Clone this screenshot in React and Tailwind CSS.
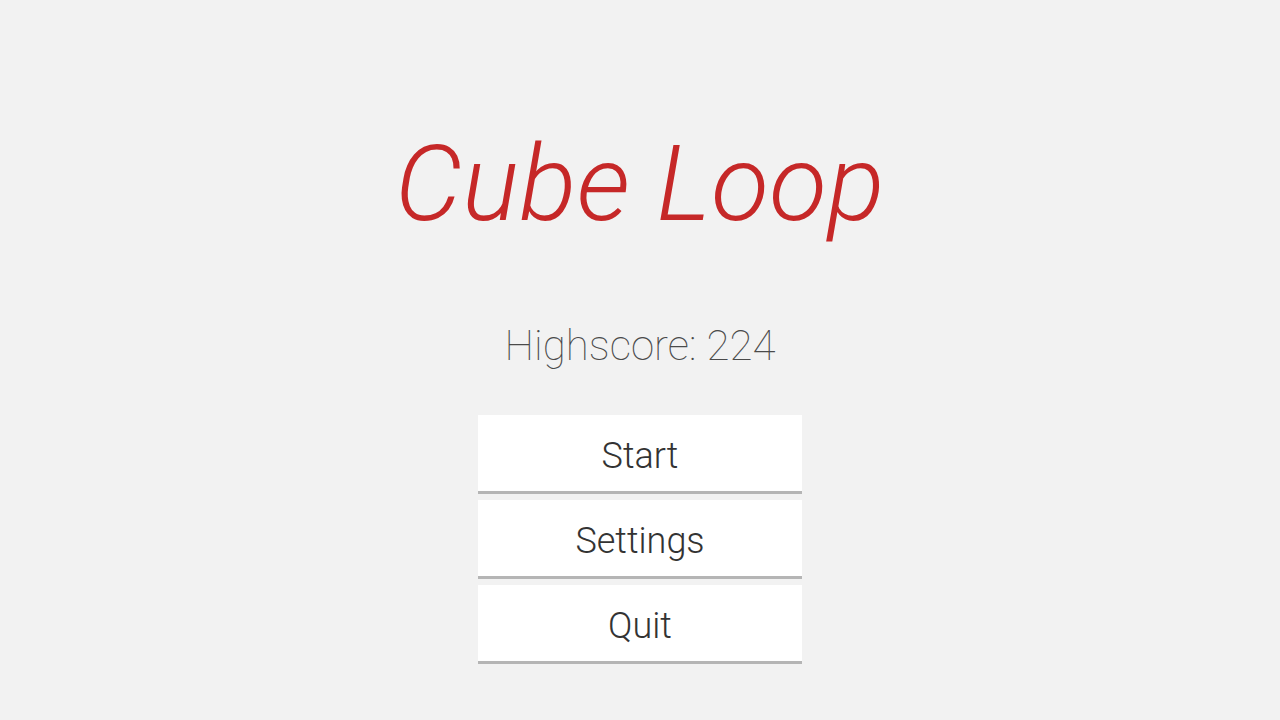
const BUTTONS = ['Start', 'Settings', 'Quit'];

export default function App() {
  return (
    <div
      className="w-[1280px] h-[720px] bg-[#f2f2f2] flex flex-col items-center pt-[131px]"
      style={{ fontFamily: 'Roboto, "Noto Sans", sans-serif' }}
    >
      {/* Title */}
      <h1 className="text-[106px] leading-none italic font-light text-[#c62828] tracking-[0.5px]">
        Cube Loop
      </h1>

      {/* Highscore */}
      <p className="mt-[88px] text-[42px] leading-none font-thin text-[#4a4a4a]">
        Highscore: 224
      </p>

      {/* Menu */}
      <div className="mt-[48px] w-[324px] flex flex-col gap-[6px]">
        {BUTTONS.map((label) => (
          <button
            key={label}
            className="h-[79px] bg-white border-b-[3px] border-[#b5b5b5] flex items-center justify-center pt-[6px] text-[36px] leading-none font-light text-[#333333]"
          >
            {label}
          </button>
        ))}
      </div>
    </div>
  );
}
